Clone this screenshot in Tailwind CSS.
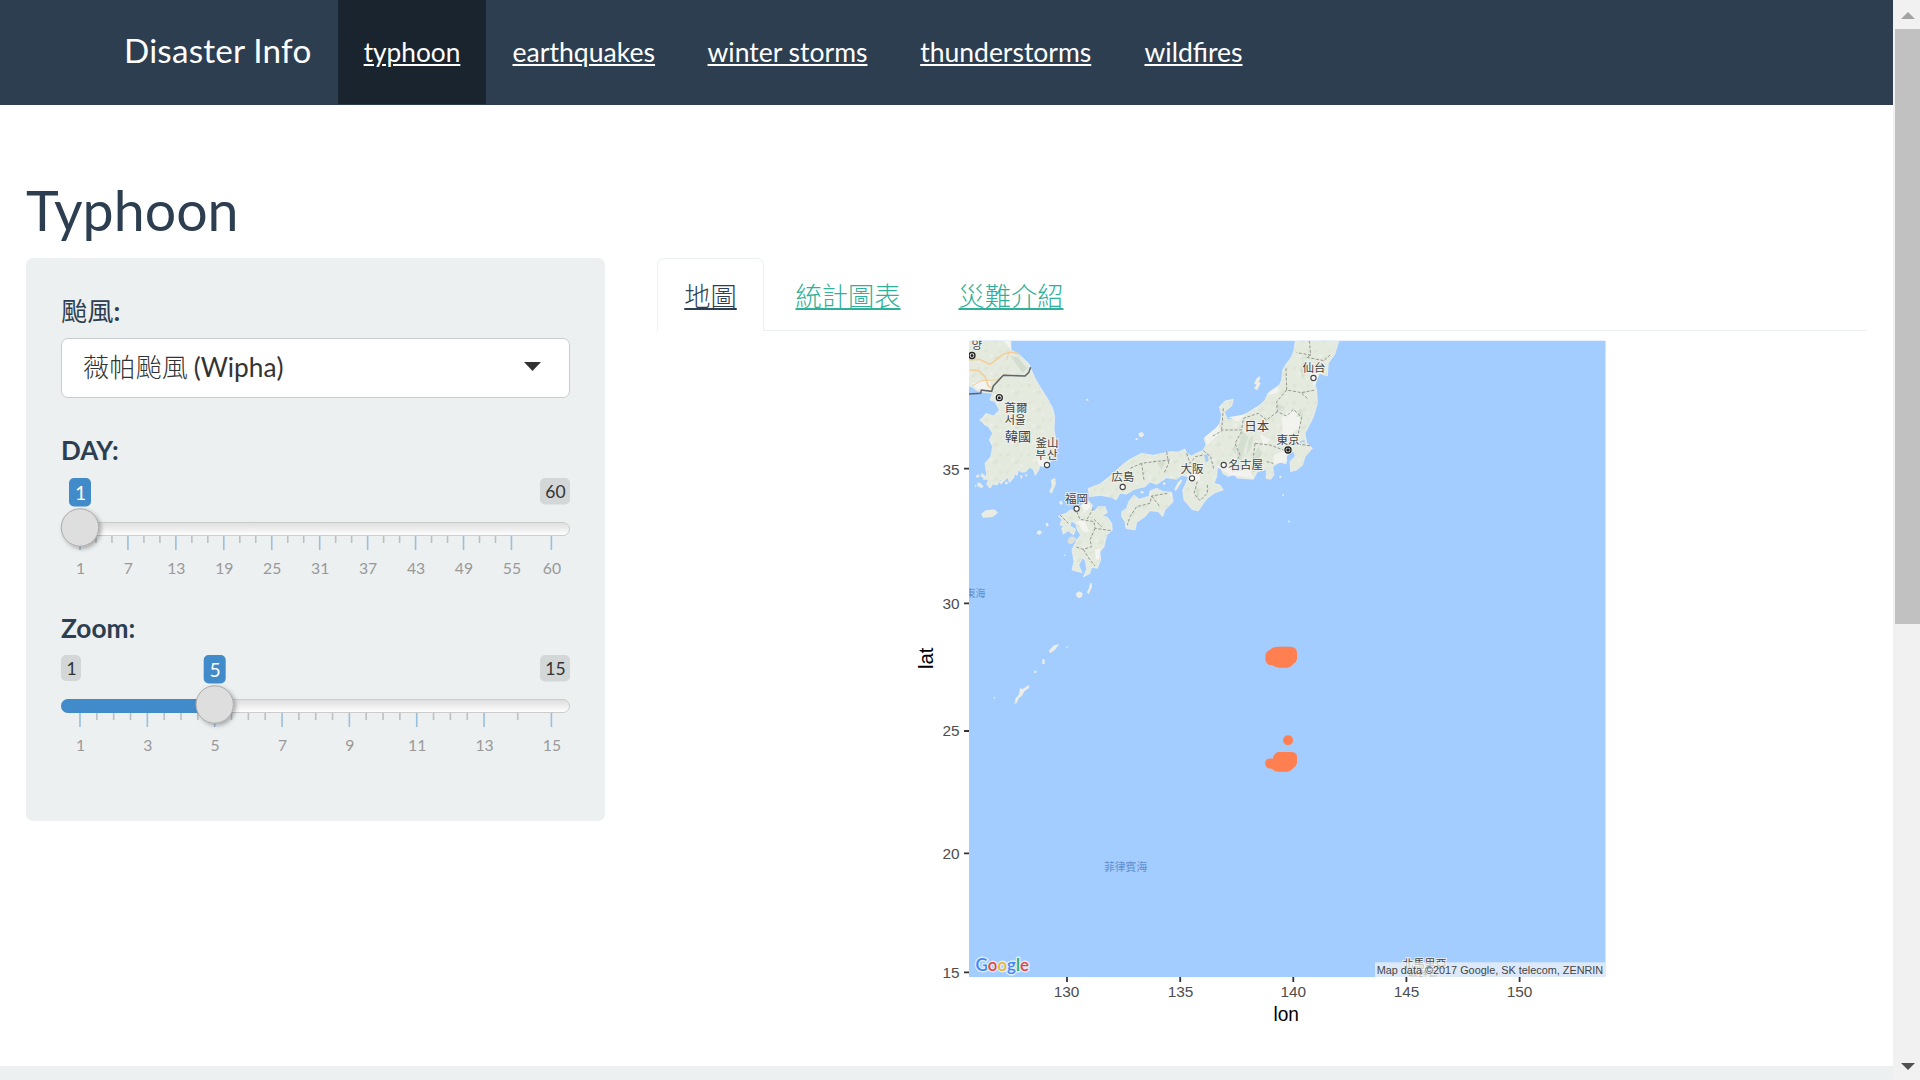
<!DOCTYPE html>
<html lang="zh-Hant">
<head>
<meta charset="utf-8">
<title>Disaster Info</title>
<script src="https://cdn.jsdelivr.net/npm/@tailwindcss/browser@4"></script>
</head>
<body class="h-[1080px] w-[1920px] overflow-hidden bg-white font-['Lato','Noto_Sans_CJK_TC',sans-serif] text-[26.25px] leading-[37.5px] text-[#2c3e50]">
<div class="flex h-full">
  <div class="flex w-[1893px] flex-col">
    <nav class="flex h-[105px] bg-[#2c3e50] pl-[124px] text-white">
      <div class="flex h-[104px] w-[214px] items-center pb-[2px] text-[33.25px] tracking-[0.2px] whitespace-nowrap">Disaster Info</div>
      <a class="flex h-[104px] w-[148px] items-center justify-center bg-[#1a242f] pt-[2px] underline">typhoon</a>
      <a class="flex h-[104px] w-[195.5px] items-center justify-center pt-[2px] text-[26.6px] underline">earthquakes</a>
      <a class="flex h-[104px] w-[212px] items-center justify-center pt-[2px] text-[26.5px] underline">winter storms</a>
      <a class="flex h-[104px] w-[224.5px] items-center justify-center pt-[2px] text-[26.5px] underline">thunderstorms</a>
      <a class="flex h-[104px] w-[151px] items-center justify-center pt-[2px] text-[26.5px] underline">wildfires</a>
    </nav>
    <main class="h-[961px] px-[26px] pt-[74px]">
      <h2 class="h-[79px] text-[55.5px] leading-[62px]">Typhoon</h2>
      <div class="flex items-start gap-[52px]">
        <section class="h-[563px] w-[579px] rounded-[7px] bg-[#ecf0f1] px-[35px] pt-[35px]">
          <label class="block h-[45px] font-bold"><span class="font-normal">颱風</span>:</label>
          <div class="flex h-[60px] items-center justify-between rounded-[7px] border border-[#c8cccd] bg-white pr-[28px] pl-[21px] text-[#333]">
            <span class="whitespace-nowrap"><span class="font-light">薇帕颱風</span><span class="-ml-px"> (Wipha)</span></span>
            <svg class="-mt-1 h-[9px] w-[17px]" viewBox="0 0 17 9"><path d="M0 0H17L8.500 9Z" fill="#333"/></svg>
          </div>
          <label class="mt-[34px] block h-[46px] text-[26px] font-bold">DAY:</label>
          <svg id="day" class="-ml-1 block h-[110px] w-[520px]" viewBox="57 478 520 110"></svg>
          <label class="mt-[22px] block h-[45px] font-bold">Zoom:</label>
          <svg id="zoom" class="-ml-1 block h-[110px] w-[520px]" viewBox="57 478 520 110"></svg>
        </section>
        <section class="flex flex-1 flex-col">
          <div class="flex h-[73px] border-b border-[#ecf0f1]">
            <a class="flex h-[73px] w-[107px] items-center justify-center rounded-t-[7px] border border-b-0 border-[#ecf0f1] bg-white pt-[4px] font-light underline decoration-2 underline-offset-[2px]">地圖</a>
            <a class="flex w-[168px] items-center justify-center pt-[5px] font-light text-[#2fb098] underline decoration-2 underline-offset-[2px]">統計圖表</a>
            <a class="flex w-[158px] items-center justify-center pt-[5px] font-light text-[#2fb098] underline decoration-2 underline-offset-[2px]">災難介紹</a>
          </div>
          <svg class="ml-[243px] block h-[700px] w-[720px]" viewBox="900 331 720 700" font-family="'Liberation Sans','Noto Sans CJK TC',sans-serif">
            <defs>
              <clipPath id="frame"><rect x="969" y="340.700" width="636.500" height="636.300"/></clipPath>
              <pattern id="relief" width="64" height="52" patternUnits="userSpaceOnUse">
                <rect width="64" height="52" fill="#e5eadf"/>
                <path d="M4 10l10-6 4 4-9 9zM30 34l14-10 3 6-10 8zM50 6l8 3-6 8z" fill="#dce4d5"/>
                <path d="M20 28l8-8 3 3-6 9zM44 46l10-7 2 5z" fill="#eff0ea"/>
              </pattern>
            </defs>
            <g clip-path="url(#frame)">
              <rect x="969" y="340" width="637" height="637" fill="#a3ccff"/>
              <!-- Korean peninsula -->
              <g transform="translate(940 330) scale(.33333)">
                <path fill="url(#relief)" stroke="#f3f3ee" stroke-width="2" stroke-linejoin="round" d="M80 25H213L212 60 225 66 245 80 268 103 272 115 285 145 300 170 322 205 338 235 344 260 342 300 347 325 350 350 340 375 330 398 318 412 300 407 296 420 286 436 280 418 268 412 258 425 245 427 235 420 232 436 222 432 222 442 208 458 204 442 190 455 180 448 172 465 158 462 150 475 140 462 146 448 130 448 140 435 135 400 152 380 158 350 148 330 158 310 145 290 135 285 125 274 128 262 138 250 160 258 178 240 165 215 150 210 157 190 130 187 110 182 98 172 80 165Z"/>
                <path fill="#f3f3ef" d="M160 192L188 190 192 215 172 222ZM290 385L330 390 322 410 295 405ZM210 32H190L215 62ZM95 160L150 150 156 180 110 178Z"/>
                <path fill="#d3ddd0" d="M210 75l28 12 24 28-14 14-18-24z"/>
                <g fill="none" stroke="#f1cf9b" stroke-width="5"><path d="M85 90L118 88 150 103 170 88 190 72 214 66 240 72M90 120L115 122 135 140 145 168 155 175"/><path stroke-width="3" d="M95 168L125 152 170 150 200 130M200 90L206 70"/></g>
                <path d="M85 192L122 190 124 180 155 184 160 168 190 136 255 138 266 128 272 112" fill="none" stroke="#606468" stroke-width="4.500"/>
                <g fill="#e8ece2" stroke="#f3f3ee" stroke-width="1"><path d="M124 552L138 541 165 539 173 548 158 560 130 563ZM333 450L345 445 347 462 335 490 328 485 336 468ZM596 310l10-3 5 8-6 7-8-4zM587 326l5-1v4h-5zM439 207l5 0 1 5h-5zM125 430l10 6-3 9-10-6zM108 437l8-3 2 6-8 3zM112 458l10 2 8 10-6 4-12-6zM106 464l3 4-4 3zM178 456l8-6 3 8-8 4zM195 458l6-4 2 8h-7zM240 436l8 2-4 8zM256 432l6 3-4 5zM358 515l6-2v8l-5 1zM128 265l-6 10-2-8z"/></g>
              </g>
              <!-- Honshu and Shikoku -->
              <g transform="translate(1120 330) scale(.33333)">
                <g fill="url(#relief)" stroke="#f3f3ee" stroke-width="2" stroke-linejoin="round">
                  <path d="M528 20L522 60 515 80 500 100 488 120 485 150 478 165 445 188 435 210 420 225 380 250 355 262 345 270 322 268 313 245 335 228 340 208 315 213 298 230 305 255 300 280 280 305 252 325 258 345 248 362 232 368 215 378 200 370 195 357 175 366 150 365 100 376 65 370 30 388 10 402 -15 425 -38 445 -60 462 -95 475 -92 500 -60 496 -25 502 -12 510 0 490 20 492 45 477 75 470 90 456 110 463 140 443 170 448 185 436 205 440 198 460 188 480 192 510 205 525 215 538 235 543 250 520 262 505 285 488 310 480 300 465 282 460 290 440 292 412 302 410 308 430 325 440 345 430 350 444 400 448 412 425 440 418 438 445 452 448 462 435 458 410 480 396 498 402 500 378 520 362 526 378 510 395 512 425 530 420 548 405 555 380 577 355 560 338 555 310 580 262 592 220 590 180 582 152 598 130 622 138 625 100 645 72 660 20Z"/>
                  <path d="M155 487L159 515 135 540 128 560 115 545 90 542 75 560 50 577 45 600 18 595 15 575 5 560 5 545 20 535 26 515 42 495 58 508 88 498 90 483 110 475 130 485Z"/>
                </g>
                <path fill="#f2f3ee" d="M485 262L510 242 540 252 540 290 505 320 488 310ZM460 375L500 360 500 395 462 402ZM290 410L310 405 340 425 390 420 400 445 330 436ZM255 320L298 285 300 310 262 345ZM202 430L238 420 240 450 208 456ZM570 130L600 128 582 175ZM440 195L475 168 470 190ZM420 310L450 330 430 350ZM325 262L380 252 355 275Z"/>
                <path fill="#cfdacb" opacity=".7" d="M365 300L385 320 372 360 362 400 350 370 358 340ZM385 330L400 320 395 350 380 375ZM335 360L352 330 348 372ZM390 275L402 290 392 302ZM470 220L495 230 470 245ZM530 260L540 230 550 260ZM400 375L415 352 428 370 408 400ZM225 470L240 478 232 510ZM540 120L552 90 550 150ZM110 400L140 385 125 420Z"/>
                <path fill="none" stroke="#8e928a" stroke-width="2.800" stroke-dasharray="9 5" d="M568 32L572 75 530 68M572 75L560 82 612 92 630 75M498 115L500 180 545 188 585 180M500 180L470 215 472 245 500 258 520 238 545 262 535 310 520 340 575 348M472 245L440 270 415 250 370 265 365 300 310 300 275 320M310 235L305 300M365 305L345 340 360 375 340 410M405 340L400 380 402 425M405 340L450 345 490 360M440 395L460 400M250 362L272 380 282 420M140 365L146 400 132 430M200 370L210 400 226 380 250 375M232 455L222 490 240 512 262 490 262 460M150 390L100 395 65 400 72 450M65 400L30 415M-15 430L15 438M142 490L95 498 90 520 50 530 30 560 22 585M95 498L120 530M545 190L562 205"/>
                <g fill="#eceee6"><path d="M410 145l8-6 4 4-6 12 6 5-10 20-10-4 8-12-8-3zM60 310l7-3 5 7-6 7-7-5zM48 325l5-1v4h-5zM163 478l10-20 10-10 4 4-12 20-8 12zM478 438l5-1 1 6-5 1zM487 493l5 0v5h-4zM503 571l8 2-3 7zM128 460l6-4 3 6-6 4zM60 485l8-3 4 6-8 3z"/></g>
                <path fill="#a3ccff" d="M252 375L262 373 266 390 258 398ZM538 335l15-5 2 5-15 3z"/>
              </g>
              <!-- Kyushu and the Ryukyu islands -->
              <g transform="translate(960 480) scale(.33333)">
                <path fill="url(#relief)" stroke="#f3f3ee" stroke-width="2" stroke-linejoin="round" d="M385 62L398 76 394 84 402 95 415 80 435 80 442 98 425 107 442 112 455 130 457 150 440 165 432 200 420 215 422 240 412 265 395 262 390 280 370 291 380 268 376 242 368 233 356 255 366 278 336 270 342 245 336 210 350 180 362 165 352 150 348 132 334 123 330 138 347 148 340 165 325 152 310 162 305 145 312 138 300 135 306 118 295 108 318 100 330 90 345 90 365 75Z"/>
                <path fill="#f4f4f1" d="M350 125L372 120 388 155 370 155ZM405 210L422 205 416 240 408 235ZM362 75L385 66 392 82 375 95Z"/>
                <path fill="#dde1d9" d="M322 182l8-12 12 0 8 8-14 14-10-1z"/>
                <path fill="none" stroke="#8e928a" stroke-width="2.800" stroke-dasharray="9 5" d="M350 95L360 118 402 125 405 145 455 152M405 145L390 180 395 200 370 208 345 200M370 208L390 240 405 258M300 105L325 130M400 85L380 120M402 118L425 140"/>
                <g fill="#eceee6"><path d="M390 310l5-1 1 12-10 22-5-6 6-12zM348 340l10-6 10 6-2 10-8 5-9-6zM230 155l10-5 6 8-8 7-7-4zM257 130l7-1 2 8-7 3zM300 66l6-2 2 8-6 2zM270 508l12-12 15-3-12 16-14 11-4-6zM247 538l7 0 0 14-7 0zM222 573l8-1-1 6-6 1zM320 499l4 1-1 4-4-1zM180 625l8 2 18-12 2 8-14 10-8 14-10 8-6 14-7 2 4-16 10-12zM102 651l4 1-1 4-4-1zM312 224l5 0v4h-4z"/></g>
              </g>
              <!-- City markers -->
              <g fill="#fff" stroke="#444" stroke-width="1.100">
                <circle cx="1047" cy="465" r="2.600"/><circle cx="1122.700" cy="487" r="2.600"/><circle cx="1076.600" cy="508.700" r="2.600"/><circle cx="1192" cy="478.300" r="2.600"/><circle cx="1223.700" cy="465" r="2.600"/><circle cx="1313.500" cy="378" r="2.600"/>
                <g stroke="#222" stroke-width="1.300"><circle cx="972" cy="355.500" r="3"/><circle cx="999.300" cy="397.700" r="3"/><circle cx="1288" cy="450" r="3"/></g>
              </g>
              <g fill="#222"><circle cx="972" cy="355.500" r="1.500"/><circle cx="999.300" cy="397.700" r="1.500"/><circle cx="1288" cy="450" r="1.800"/></g>
              <g font-size="11.500" fill="#444" stroke="#f4f4f1" stroke-width="2" stroke-opacity=".8" paint-order="stroke" font-family="'Noto Sans CJK TC','Noto Sans CJK KR',sans-serif">
                <text x="959" y="349" textLength="23">평양</text>
                <text x="1004.500" y="412">首爾</text><text x="1004.500" y="424" textLength="21">서울</text>
                <text x="1005" y="440.500" font-size="13">韓國</text>
                <text x="1035.500" y="447">釜山</text><text x="1035.500" y="459" textLength="22">부산</text>
                <text x="1111.300" y="481">広島</text><text x="1065" y="503">福岡</text>
                <text x="1180.500" y="472.500">大阪</text><text x="1228.500" y="469">名古屋</text>
                <text x="1244.300" y="431" font-size="12.500">日本</text><text x="1276.500" y="443.500">東京</text>
                <text x="1302.500" y="372">仙台</text>
                <text x="1402.500" y="968" font-size="11">北馬里亞</text><text x="1408" y="979" font-size="10">納群島</text>
              </g>
              <g fill="#5f8fcf" font-family="'Noto Sans CJK TC',sans-serif"><text x="965.500" y="597" font-size="10">東海</text><text x="1104" y="870.500" font-size="10.800">菲律賓海</text></g>
              <!-- Storm track -->
              <g fill="#ff7f50">
                <path d="M1274 647.300q2-.5 5-.5h12q5.800 .7 6 6v6.500q-.5 2.500-3.500 4.500-2.500 3.700-7 4h-7q-4-.3-7-2.500-6 .5-7-5v-5q.5-4 4.500-5.500 1.800-1.700 4-2.500z"/>
                <circle cx="1288" cy="740.300" r="5"/>
                <path d="M1278 752h14q5 .5 5 5v6q-.5 3-4 5.500-3 3-6 3.300h-9q-4-.5-6-3-6.500 0-7-5.500 .5-4.500 5-4.800h3q.500-5 5-6.500z"/>
              </g>
              <rect x="1375" y="962.300" width="231" height="15" fill="#f5f5f5" fill-opacity=".7"/>
              <text x="1376.700" y="973.500" font-size="11" textLength="226.500" lengthAdjust="spacingAndGlyphs" fill="#444">Map data ©2017 Google, SK telecom, ZENRIN</text>
              <text x="975.500" y="971" font-size="18" font-family="Lato,sans-serif" font-weight="600" textLength="53.500" lengthAdjust="spacingAndGlyphs" stroke="#dcebff" stroke-width="3" paint-order="stroke" stroke-linejoin="round" fill="#4285f4">G<tspan fill="#ea4335">o</tspan><tspan fill="#e8b92a">o</tspan><tspan>g</tspan><tspan fill="#34a853">l</tspan><tspan fill="#ea4335">e</tspan></text>
            </g>
            <path stroke="#333" stroke-width="1.800" d="M964 468.700h5M964 603.300h5M964 731h5M964 853.300h5M964 972.300h5M1067 977v5M1180.200 977v5M1293.300 977v5M1406.400 977v5M1519.600 977v5"/>
            <g fill="#4d4d4d" font-size="15.400">
              <g text-anchor="end"><text x="959.500" y="474.500">35</text><text x="959.500" y="608.500">30</text><text x="959.500" y="736">25</text><text x="959.500" y="858.700">20</text><text x="959.500" y="978">15</text></g>
              <g text-anchor="middle"><text x="1066.500" y="997">130</text><text x="1180.500" y="997">135</text><text x="1293.300" y="997">140</text><text x="1406.500" y="997">145</text><text x="1519.500" y="997">150</text></g>
            </g>
            <g font-size="20" fill="#000"><text x="1273.500" y="1020.700" textLength="25.500" lengthAdjust="spacingAndGlyphs">lon</text><text transform="translate(932.500 669) rotate(-90)" textLength="21.500" lengthAdjust="spacingAndGlyphs">lat</text></g>
          </svg>
        </section>
      </div>
    </main>
    <footer class="flex-1 bg-[#ecf0f1]"></footer>
  </div>
  <aside class="flex flex-1 flex-col items-center bg-[#f1f1f1]">
    <svg class="mt-[12px] ml-[2px] h-[7px] w-[14px]" viewBox="0 0 14 7"><path d="M0 7L7 0 14 7Z" fill="#a3a3a3"/></svg>
    <div class="mt-[10px] ml-[2px] h-[595px] w-[25px] bg-[#c1c1c1]"></div>
    <svg class="mt-auto mb-[10px] ml-[2px] h-[7px] w-[14px]" viewBox="0 0 14 7"><path d="M0 0H14L7 7Z" fill="#505050"/></svg>
  </aside>
</div>
<script>
function slider(id, lo, hi, val, majors, minors) {
  const x = v => 80 + (v - lo) / (hi - lo) * 471.4, cx = x(val);
  let s = `<defs><linearGradient id="g-${id}" x2="0" y2="1"><stop stop-color="#ddd"/><stop offset="1" stop-color="#fff"/></linearGradient><filter id="s-${id}" x="-30%" y="-30%" width="170%" height="170%"><feDropShadow dx="2" dy="2" stdDeviation="2" flood-opacity=".3"/></filter></defs>`;
  const badge = (l, w, h, t, f, c, fs, o) => `<rect x="${l}" y="478" width="${w}" height="${h}" rx="5" fill="${f}" fill-opacity="${o}"/><text x="${l + w / 2 + .5}" y="${fs > 18 ? 499.500 : 498}" font-size="${fs}" fill="${c}" text-anchor="middle">${t}</text>`;
  if (val > lo) s += badge(61, 20, 26, lo, '#000', '#333', 17.5, .1);
  s += badge(540, 30, 26.5, hi, '#000', '#333', 17.5, .1);
  s += badge(cx - 11, 22, 28.5, val, '#428bca', '#fff', 19.25, 1);
  s += `<rect x="61.500" y="522.500" width="508" height="13" rx="6.500" fill="url(#g-${id})" stroke="#ccc"/>`;
  if (val > lo) s += `<path d="M${cx} 522H68a7 7 0 0 0 0 14H${cx}Z" fill="#428bca"/>`;
  minors.forEach(v => s += `<path d="M${x(v)} 536v7" stroke="#bcc0c1" stroke-width="1.600"/>`);
  majors.forEach(v => s += `<path d="M${x(v)} 536v14" stroke="#99bfdc" stroke-width="1.600"/><text x="${x(v) + .5}" y="574" font-size="15.750" fill="#999" text-anchor="middle">${v}</text>`);
  s += `<circle cx="${cx}" cy="527.500" r="18.700" fill="#dedede" stroke="#aaa" filter="url(#s-${id})"/>`;
  document.getElementById(id).innerHTML = s;
}
const dayMinors = [], zoomMinors = [14];
for (let v = 3; v < 55; v += 2) if ((v - 1) % 6) dayMinors.push(v);
for (let v = 1.5; v < 13; v += .5) if ((v - 1) % 2) zoomMinors.push(v);
slider('day', 1, 60, 1, [1, 7, 13, 19, 25, 31, 37, 43, 49, 55, 60], dayMinors);
slider('zoom', 1, 15, 5, [1, 3, 5, 7, 9, 11, 13, 15], zoomMinors);
</script>
</body>
</html>
